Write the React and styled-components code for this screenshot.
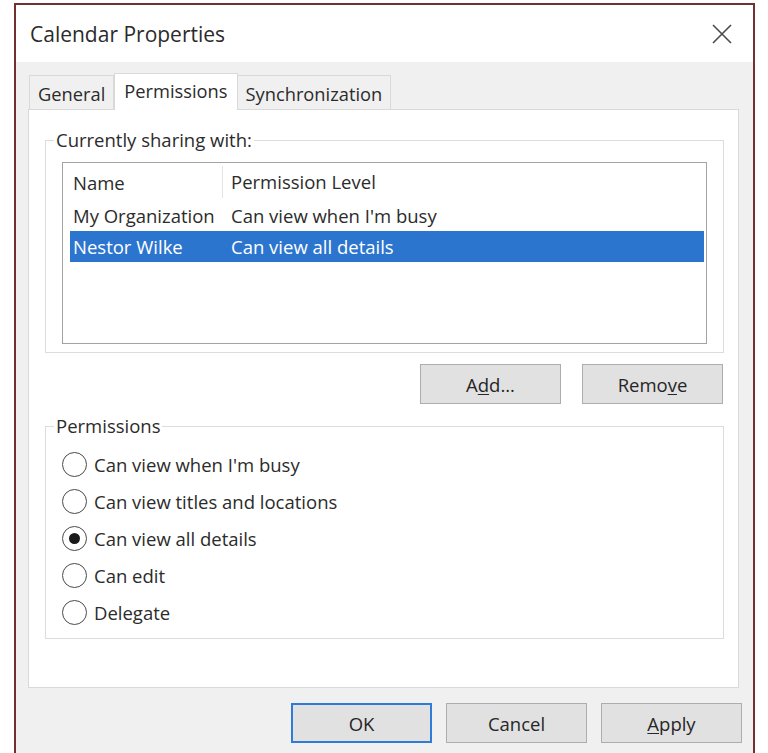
import React from "react";
import styled, { createGlobalStyle } from "styled-components";

const GlobalStyle = createGlobalStyle`
  body {
    margin: 0;
    background: #ffffff;
    font-family: "Open Sans", "Noto Sans", Arial, sans-serif;
    color: #2a2a2a;
  }
`;

const Window = styled.div`
  box-sizing: border-box;
  width: 741px;
  height: 750px;
  margin: 3px 0 0 14px;
  border: 2px solid #74302f;
  border-bottom: none;
  display: flex;
  flex-direction: column;
  overflow: hidden;
`;

const TitleBar = styled.div`
  height: 57px;
  flex-shrink: 0;
  background: #ffffff;
  display: flex;
  align-items: center;
  justify-content: space-between;
  padding: 0 21px 0 14px;
`;

const Title = styled.div`
  font-size: 21px;
  color: #2b2b2b;
`;

const CloseButton = styled.div`
  width: 20px;
  height: 20px;
  display: flex;
`;

const Body = styled.div`
  flex: 1;
  background: #f0f0f0;
  padding: 10px 14px 0 12px;
`;

const TabStrip = styled.div`
  display: flex;
  align-items: flex-end;
  height: 37px;
  padding-left: 1px;
  position: relative;
  z-index: 1;
`;

const Tab = styled.div`
  box-sizing: border-box;
  height: ${({ $active }) => ($active ? "37px" : "34px")};
  margin-bottom: ${({ $active }) => ($active ? "-1px" : "0")};
  padding: 0 ${({ $active }) => ($active ? "9px" : "8px")};
  background: ${({ $active }) => ($active ? "#ffffff" : "#f0f0f0")};
  border: 1px solid #d9d9d9;
  border-bottom: none;
  margin-left: ${({ $active }) => ($active ? "0" : "-1px")};
  font-size: 18.3px;
  line-height: ${({ $active }) => ($active ? "34px" : "36px")};
  color: #2b2b2b;
  &:first-child {
    margin-left: 0;
  }
`;

const Panel = styled.div`
  box-sizing: border-box;
  height: 579px;
  background: #ffffff;
  border: 1px solid #d9d9d9;
  padding: 17px 14px 0 16px;
`;

const Group = styled.fieldset`
  margin: ${({ $gap }) => $gap || 0}px 0 0;
  padding: ${({ $top }) => $top || 0}px 16px ${({ $bottom }) => $bottom || 0}px;
  border: 1px solid #dcdcdc;
  min-width: 0;
`;

const Legend = styled.legend`
  margin-left: -8px;
  padding: 0 2px;
  font-size: 18.5px;
  line-height: 26px;
  color: #2b2b2b;
`;

const ListView = styled.div`
  box-sizing: border-box;
  height: 182px;
  margin-top: 9px;
  border: 1px solid #a3a3a3;
  padding: 0 2px 0 7px;
  background: #ffffff;
`;

const ListRow = styled.div`
  display: grid;
  grid-template-columns: 153px 1fr;
  height: ${({ $header }) => ($header ? "37px" : "31px")};
  align-items: center;
  font-size: 18.5px;
  color: ${({ $selected }) => ($selected ? "#ffffff" : "#2b2b2b")};
  background: ${({ $selected }) => ($selected ? "#2c75cf" : "transparent")};
`;

const NameCell = styled.div`
  box-sizing: border-box;
  padding-left: 3px;
  white-space: nowrap;
  overflow: visible;
  height: ${({ $header }) => ($header ? "32px" : "auto")};
  line-height: ${({ $header }) => ($header ? "34px" : "normal")};
  border-right: ${({ $header }) => ($header ? "1px solid #e3e3e3" : "none")};
`;

const LevelCell = styled.div`
  padding-left: 8px;
  white-space: nowrap;
`;

const ButtonRow = styled.div`
  display: flex;
  justify-content: flex-end;
  gap: ${({ $gap }) => $gap}px;
  margin-top: ${({ $top }) => $top}px;
  margin-right: ${({ $right }) => $right || 0}px;
`;

const Button = styled.div`
  box-sizing: border-box;
  width: 141px;
  height: 40px;
  background: #e1e1e1;
  border: ${({ $default }) => ($default ? "2px solid #2f7cd8" : "1px solid #adadad")};
  display: flex;
  align-items: center;
  justify-content: center;
  font-size: 18.5px;
  color: #262626;
  u {
    text-underline-offset: 2px;
  }
`;

const RadioRow = styled.div`
  display: flex;
  align-items: center;
  gap: 7px;
  height: 37px;
  font-size: 18.5px;
  color: #2b2b2b;
`;

const RadioCircle = styled.span`
  box-sizing: border-box;
  width: 25px;
  height: 25px;
  border-radius: 50%;
  border: 1.5px solid #4a4a4a;
  background: #ffffff;
  display: flex;
  align-items: center;
  justify-content: center;
  &::after {
    content: "";
    width: 11px;
    height: 11px;
    border-radius: 50%;
    background: ${({ $checked }) => ($checked ? "#1a1a1a" : "transparent")};
  }
`;

const sharing = [
  { name: "My Organization", level: "Can view when I'm busy" },
  { name: "Nestor Wilke", level: "Can view all details", selected: true },
];

const levels = [
  "Can view when I'm busy",
  "Can view titles and locations",
  "Can view all details",
  "Can edit",
  "Delegate",
];

const App = () => {
  return (
    <React.Fragment>
      <GlobalStyle />
      <Window>
        <TitleBar>
          <Title>Calendar Properties</Title>
          <CloseButton>
            <svg width="20" height="20" viewBox="0 0 20 20">
              <path d="M1 1 L19 19 M19 1 L1 19" stroke="#4a4a4a" strokeWidth="1.6" fill="none" />
            </svg>
          </CloseButton>
        </TitleBar>
        <Body>
          <TabStrip>
            <Tab>General</Tab>
            <Tab $active>Permissions</Tab>
            <Tab>Synchronization</Tab>
          </TabStrip>
          <Panel>
            <Group $bottom={8}>
              <Legend>Currently sharing with:</Legend>
              <ListView>
                <ListRow $header>
                  <NameCell $header>Name</NameCell>
                  <LevelCell>Permission Level</LevelCell>
                </ListRow>
                {sharing.map((row) => (
                  <ListRow key={row.name} $selected={row.selected}>
                    <NameCell>{row.name}</NameCell>
                    <LevelCell>{row.level}</LevelCell>
                  </ListRow>
                ))}
              </ListView>
            </Group>
            <ButtonRow $gap={21} $top={11} $right={1}>
              <Button>A<u>d</u>d...</Button>
              <Button>Remo<u>v</u>e</Button>
            </ButtonRow>
            <Group $gap={9} $top={7} $bottom={7}>
              <Legend>Permissions</Legend>
              {levels.map((level) => (
                <RadioRow key={level}>
                  <RadioCircle $checked={level === "Can view all details"} />
                  {level}
                </RadioRow>
              ))}
            </Group>
          </Panel>
          <ButtonRow $gap={14} $top={15} $right={-3}>
            <Button $default>OK</Button>
            <Button>Cancel</Button>
            <Button><u>A</u>pply</Button>
          </ButtonRow>
        </Body>
      </Window>
    </React.Fragment>
  );
};

export default App;
